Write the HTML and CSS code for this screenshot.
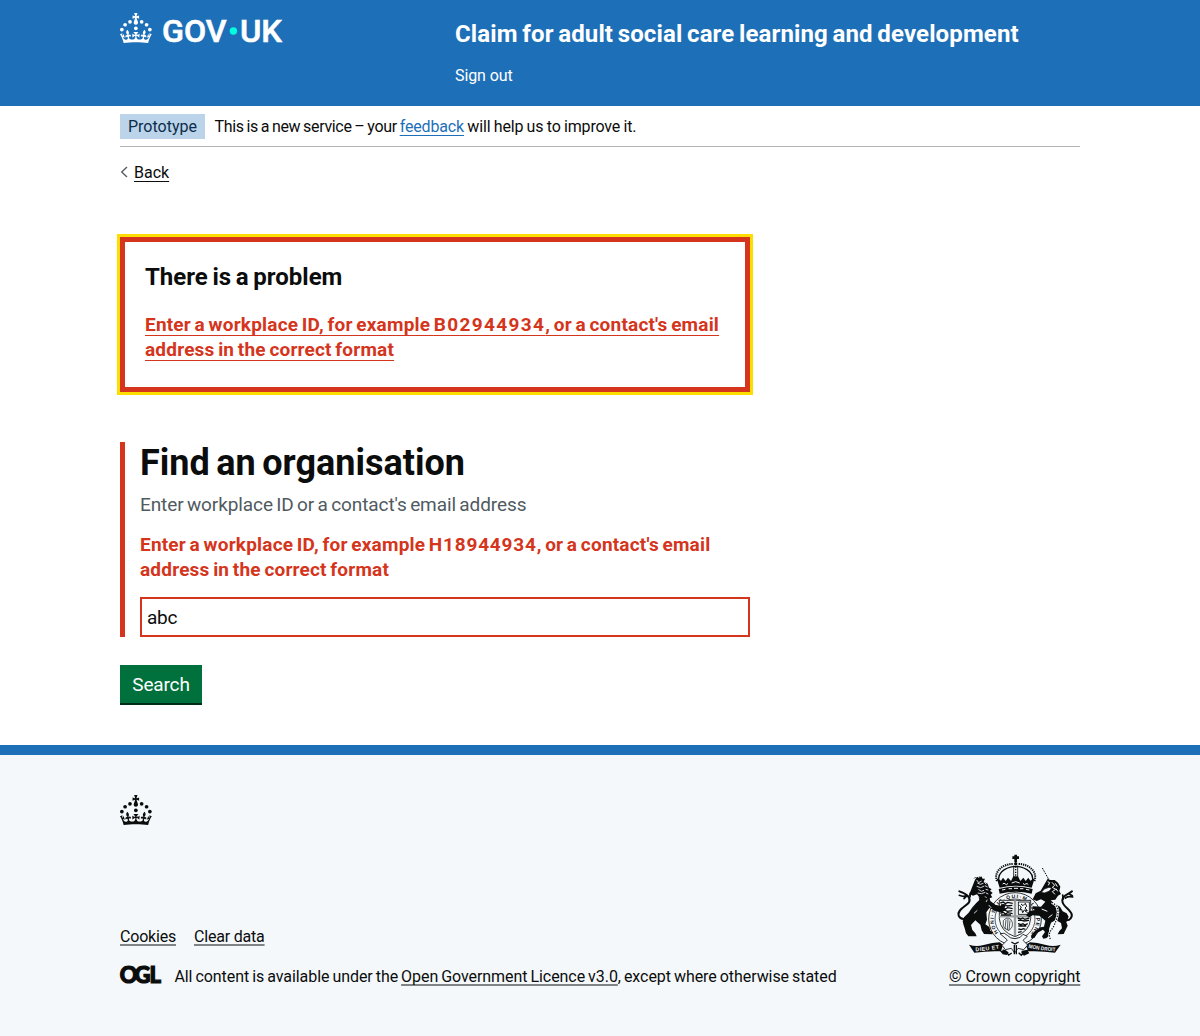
FILE: index.html
```html
<!DOCTYPE html>
<html lang="en">
<head>
<meta charset="utf-8">
<title>Find an organisation</title>
<link rel="stylesheet" href="styles.css">
</head>
<body>
<svg class="defs" width="0" height="0" aria-hidden="true">
  <symbol id="crown" viewBox="0 0 64 60">
    <circle cx="20" cy="17.6" r="3.7"/><circle cx="10.2" cy="23.5" r="3.7"/><circle cx="3.7" cy="33.2" r="3.7"/><circle cx="31.7" cy="30.6" r="3.7"/><circle cx="43.3" cy="17.6" r="3.7"/><circle cx="53.2" cy="23.5" r="3.7"/><circle cx="59.7" cy="33.2" r="3.7"/>
    <path d="M33.1,9.8c.2-.1.3-.3.5-.5l4.6,2.4v-6.8l-4.6,1.5c-.1-.2-.3-.3-.5-.5l1.9-5.9h-6.7l1.9,5.9c-.2.1-.3.3-.5.5l-4.6-1.5v6.8l4.6-2.4c.1.2.3.3.5.5l-2.6,8c-.9,2.8,1.2,5.7,4.1,5.7h0c3,0,5.1-2.9,4.1-5.7l-2.6-8ZM37,37.9s-3.4,3.8-4.1,6.1c2.2,0,4.2-.5,6.4-2.8l-.7,8.5c-2-2.8-4.4-4.1-5.7-3.8.1,3.1.5,6.7,5.8,7.2,3.7.3,6.7-1.5,7-3.8.4-2.6-2-4.3-3.7-1.6-1.4-4.5,2.4-6.1,4.9-3.2-1.9-4.5-1.8-7.7,2.4-10.9,3,4,2.6,7.3-1.2,11.1,2.4-1.3,6.2,0,4,4.6-1.2-2.8-3.7-2.2-4.2.2-.3,1.7.7,3.7,3,4.2,1.9.3,4.7-.9,7-5.9-1.3,0-2.4.7-3.9,1.7l2.4-8c.6,2.3,1.4,3.7,2.2,4.5.6-1.6.5-2.8,0-5.3l5,1.8c-2.6,3.6-5.2,8.7-7.3,17.5-7.4-1.1-15.7-1.7-24.5-1.7h0c-8.8,0-17.1.6-24.5,1.7-2.1-8.9-4.7-13.9-7.3-17.5l5-1.8c-.5,2.5-.6,3.7,0,5.3.8-.8,1.6-2.3,2.2-4.5l2.4,8c-1.5-1-2.6-1.7-3.9-1.7,2.3,5,5.2,6.2,7,5.9,2.3-.4,3.3-2.4,3-4.2-.5-2.4-3-3.1-4.2-.2-2.2-4.6,1.6-6,4-4.6-3.7-3.7-4.2-7.1-1.2-11.1,4.2,3.2,4.3,6.4,2.4,10.9,2.5-2.8,6.3-1.3,4.9,3.2-1.8-2.7-4.1-1-3.7,1.6.3,2.3,3.3,4.1,7,3.8,5.4-.5,5.7-4.2,5.8-7.2-1.3-.2-3.7,1-5.7,3.8l-.7-8.5c2.2,2.3,4.2,2.7,6.4,2.8-.7-2.3-4.1-6.1-4.1-6.1h10.6Z"/>
  </symbol>
</svg>

<header class="header">
  <div class="container header-row">
    <a class="logo" href="#" aria-label="GOV.UK">
      <svg width="170" height="44" viewBox="0 0 170 44" fill="#fff">
        <use href="#crown" width="32" height="30"/>
        <text class="logo-text" x="42.1" y="28.8" textLength="64.5" lengthAdjust="spacingAndGlyphs">GOV</text>
        <circle cx="113.4" cy="18" r="3.7" fill="#00ffe0"/>
        <text class="logo-text" x="120" y="28.8" textLength="42" lengthAdjust="spacingAndGlyphs">UK</text>
      </svg>
    </a>
    <div class="header-content">
      <a class="service-name" href="#">Claim for adult social care learning and development</a>
      <nav><a class="sign-out" href="#">Sign out</a></nav>
    </div>
  </div>
</header>

<div class="container">
  <div class="phase-banner">
    <strong class="tag">Prototype</strong>
    <span class="phase-text">This is a new service – your <a href="#">feedback</a><span class="phase-end"> will help us to improve it.</span></span>
  </div>
  <a class="back-link" href="#"><svg width="8" height="12" viewBox="0 0 8 12"><path d="M7 1 1.7 6 7 11" fill="none" stroke="#505a5f" stroke-width="1.3"/></svg><span>Back</span></a>

  <main class="main">
    <div class="error-summary">
      <h2>There is a problem</h2>
      <a href="#q">Enter a workplace ID, for example <span class="code-b">B02944934</span>, or a contact's email<br>address in the correct format</a>
    </div>
    <form>
      <div class="form-group">
        <h1>Find an organisation</h1>
        <div class="hint">Enter workplace ID or a contact's email address</div>
        <p class="error-message">Enter a workplace ID, for example <span class="code-h">H18944934</span>, or a contact's email<br>address in the correct format</p>
        <input id="q" type="text" value="abc">
      </div>
      <button class="button" type="button">Search</button>
    </form>
  </main>
</div>

<footer class="footer">
  <div class="container">
    <svg class="footer-crown" width="32" height="30" fill="#0b0c0c"><use href="#crown" width="32" height="30"/></svg>
    <div class="footer-row">
      <div class="footer-meta">
        <nav class="footer-links"><a href="#">Cookies</a><a href="#">Clear data</a></nav>
        <div class="licence">
          <svg class="ogl-logo" width="47" height="32" viewBox="-3 -7 47 32"><text class="ogl" x="-0.3 14.6 29.6" y="16.5">OGL</text></svg>
          <span class="licence-text">All content is available under the <a href="#">Open Government Licence v3.0</a>, except where otherwise stated</span>
        </div>
      </div>
      <div class="copyright">
        <svg class="crest" width="125" height="102" viewBox="39 27 375 306" fill="#0b0c0c" stroke="#0b0c0c" stroke-width="0">
          <!-- crown -->
          <path d="M223 29h8v5h6v8h-6v9h-8v-9h-6v-8h6z"/>
          <circle cx="227" cy="56" r="5"/>
          <g fill="none" stroke-width="4">
            <path d="M180 116C166 88 192 66 227 64C262 66 288 88 274 116"/>
            <path d="M171 108C160 82 186 56 220 57M283 108C294 82 268 56 234 57" stroke-width="6" stroke-dasharray="4 2.5"/>
            <path d="M221 62V98M233 62V98" stroke-width="2.5"/>
            <path d="M227 64V98" stroke-width="4" stroke-dasharray="4 4"/>
          </g>
          <path d="M170 100l13 7 6-9 8 10 7-10 9 10 7-14h14l7 14 9-10 7 10 8-10 6 9 13-7-9 28q-48-12-96 0z"/>
          <path d="M176 132q51-15 102 0l-3 14q-48-12-96 0z"/>
          <path d="M188 117q4-5 8 0t8-2M215 114q12-8 24 0M249 115q4 6 8 2t8 2M186 135l10-2M206 131h10M222 130h12M240 131h10M258 133l10 2" fill="none" stroke="#f4f8fb" stroke-width="3"/>
          <!-- garter and shield -->
          <circle cx="225" cy="222" r="79" fill="#f4f8fb" stroke-width="2.5"/>
          <circle cx="225" cy="222" r="60" fill="#f4f8fb" stroke-width="2"/>
          <path id="garter" d="M175 263A64 64 0 1 1 275 263" fill="none"/>
          <text class="garter-text"><textPath href="#garter" textLength="304">HONI·SOIT·QUI·MAL·Y·PENSE</textPath></text>
          <path d="M178 166h94v55q-3 39-47 54q-44-15-47-54z" fill="#f4f8fb" stroke-width="2.5"/>
          <path d="M225 166v108M178 214h94" stroke="#9a9d9f" stroke-width="7"/>
          <g fill="none" stroke-width="4">
            <path d="M181 174l9-3 6 5 7-4 15 3M183 180h13l6 3 15-2M181 190l9-3 6 5 7-4 15 3M183 196h13l6 3 15-2M181 205l9-3 6 5 7-4 15 3M183 210h30"/>
            <path d="M233 219l9 3 6-3 6 4 14-4M234 226h12l6 2 15-2M234 236l9 3 6-3 6 4 8-4M235 243h24M235 252l9 2 6-3 6 2M234 262l11-2"/>
            <rect x="235" y="171" width="33" height="37" stroke-width="2.5"/>
            <path d="M243 177l6 5 7-7 4 9-5 5 7 8-9-2-5 8-3-10-6 2 5-9-6-5M255 198l8 5" stroke-width="3"/>
            <path d="M190 245V227q9-12 21-5q9 8 5 24l-9 11q-15-7-17-12M198 224l-3 28M204 222l-2 33M210 226l-3 29" stroke-width="2"/>
          </g>
          <!-- lion -->
          <path d="M105 104l7-9 5 4 7-5 4 7 7 0-4 9 12 6 4 12 8 5-5 4 8 7-6 5 5 8-8 3 2 8 16 12 14 2 9-5 7 6-5 6 7 6-9 3-3 6-10-3-11-3-18-9-9 13 2 22-5 14 12 8 3 11 8 5-2 6-25-1-7-11-4-17-15-13-13 14 4 15 9 10 4 9-25 0-7-9-4-15-4-12-2-9 4-12 14-14 10-15 12-13 10-10-3-12-4-5-12 4-6-3-8 6-7z"/>
          <path d="M76 246L70 270M108 230L110 255" fill="none" stroke="#f4f8fb" stroke-width="0"/>
          <g fill="none" stroke-linecap="round">
            <path d="M97 209C82 223 63 228 56 212C50 193 79 184 87 172C94 159 81 146 58 139" stroke-width="6"/>
            <path d="M58 151q14 6 21 0M72 161l9-9M91 144l-1 12" stroke-width="5"/>
          </g>
          <path d="M110 105l6 8 9-5M112 114l9 4 9-3M110 124l12 4 11-5M115 133l9 6 8-3M113 144l11 2 12-4M133 112l6 6M135 122l8 4M137 133l8 2M138 144l7 3M112 153l6 5M135 154l5 5M146 180l8 9M112 196l-10 9M142 164l-4 7" fill="none" stroke="#f4f8fb" stroke-width="2.5"/>
          <path d="M102 101l5-5 6 8 9-7M118 94l1 8" fill="none" stroke-width="2"/>
          <!-- unicorn -->
          <path d="M307 69l19 34" fill="none" stroke-width="3" stroke-dasharray="5 3"/>
          <path d="M323 101l8 4 13 0 10 8 7 12-3 13 5 9-9 5-8 12-14 2 14 12 14 7 8 14 12 6 6 10-7 17 4 10-12 25-18 1 5-10 8-8-3-16-16-9-14 8-6 19 2 17-9 10-10 2-4-7 9-13-6-7-18 10-7 14-10 2-1-8 11-13 17-12 11-2 4-18-18-15-20-1-10 6-10-6 10-12 17-4-10-5 5-6 23 1 13-15-13-7-13 5-12-5 9-18 15-8z"/>
          <g fill="none" stroke-linecap="round">
            <path d="M367 222C391 234 402 212 390 199C382 188 366 181 367 166C368 148 384 150 396 139" stroke-width="6"/>
            <path d="M398 156q-13-3-22 3M368 150l2 12M388 147l9 5" stroke-width="5"/>
          </g>
          <path d="M313 132l14-5 8 3-8 9-14 5-9-2z" fill="#f4f8fb" stroke-width="2"/>
          <path d="M336 112l8 9-7 6 10 6-10 7 8 8M323 110l6 3-4 8M346 115l6 10M348 131l5 8M305 192l17 7M325 218l12-9" fill="none" stroke="#f4f8fb" stroke-width="3"/>
          <path d="M335 172q25 12 17 42t-20 43q-8 13 1 29" fill="none" stroke="#f4f8fb" stroke-width="7"/>
          <path d="M335 172q25 12 17 42t-20 43q-8 13 1 29" fill="none" stroke-width="3.5" stroke-dasharray="4 4"/>
          <!-- motto ribbon -->
          <path d="M87 299q22 8 44 1 28-7 48-8l10 7-6 20q-38-2-80 4z"/>
          <path d="M362 299q-22 8-44 1-28-7-48-8l-13 7 8 20q38-2 80 4z"/>
          <path d="M180 266q14-5 22 5t23 10q18-1 24-13l13 6-13 12 14 14-12 14-17-4-10 14-10-14-18 4-10-13 16-16z" fill="#f4f8fb" stroke-width="2.5"/>
          <path d="M188 315l9 3 9 12 9-6M264 315l-9 4-11 12-8-8M214 291l11 6 11-6M223 300v28M229 300v28" fill="none" stroke-width="4"/>
          <path d="M180 318l16-2 10 6-6 8-12-2zM245 317l17-2 6 10-16 7-8-8z"/>
          <path id="motto-left" d="M107 319q32-1 73-9" fill="none"/>
          <path id="motto-right" d="M265 308q40 10 83 11" fill="none"/>
          <text class="motto"><textPath href="#motto-left" textLength="71">DIEU ET</textPath></text>
          <text class="motto"><textPath href="#motto-right" textLength="82" lengthAdjust="spacingAndGlyphs">MON DROIT</textPath></text>
        </svg>
        <a href="#">© Crown copyright</a>
      </div>
    </div>
  </div>
</footer>
</body>
</html>
```
FILE: styles.css
```css
* { box-sizing: border-box; }
body {
  margin: 0;
  font: 16px/20px Roboto, "Noto Sans", sans-serif;
  color: #0b0c0c;
  background: #fff;
}
a { color: inherit; text-decoration-thickness: 1px; text-underline-offset: 3px; }
svg { display: block; flex: none; overflow: visible; }
.defs { position: absolute; }
.container { width: 960px; margin: 0 auto; }

.header { height: 106px; background: #1d70b8; color: #fff; }
.header-row { display: flex; }
.logo { width: 335px; padding-top: 13px; }
.logo-text { font: 500 31px Roboto, sans-serif; stroke: #fff; stroke-width: .6; }
.header-content { padding-top: 19px; }
.header a { text-decoration: none; }
.service-name { display: block; font-size: 24px; line-height: 30px; font-weight: 700; word-spacing: -1.5px; letter-spacing: .13px; }
.header nav { margin-top: 17px; letter-spacing: -.1px; }

.phase-banner {
  display: flex;
  align-items: center;
  gap: 9.5px;
  height: 41px;
  border-bottom: 1px solid #b1b4b6;
}
.tag { height: 25px; width: 85px; padding: 0 8px; line-height: 26px; font-weight: 400; background: #bbd4ea; color: #0c2d4a; white-space: nowrap; }
.phase-text { padding-top: 2px; white-space: nowrap; letter-spacing: -.34px; word-spacing: -.8px; }
.phase-text a { color: #1d70b8; letter-spacing: -.15px; }
.phase-end { letter-spacing: -.15px; word-spacing: -.5px; }
.back-link { display: inline-flex; align-items: center; gap: 6px; margin-top: 16px; height: 20px; text-decoration: none; }
.back-link svg { margin-top: -2px; }
.back-link span { text-decoration: underline; text-decoration-thickness: 1px; }

.main { width: 630px; padding-top: 54px; }
.error-summary {
  height: 155px;
  padding: 20px;
  border: 5px solid #d4351c;
  outline: 3px solid #fd0;
  color: #d4351c;
  font: 700 19px/25px Roboto, sans-serif;
  letter-spacing: .2px;
  word-spacing: -1.3px;
  white-space: nowrap;
}
.error-summary h2 { margin: 0 0 20px; font-size: 24px; line-height: 30px; color: #0b0c0c; letter-spacing: 0; }
.error-summary a { text-underline-offset: 4px; }
.code-b { letter-spacing: 1.35px; }
.code-h { letter-spacing: .8px; }
.form-group { margin-top: 50px; height: 195px; padding-left: 15px; border-left: 5px solid #d4351c; }
h1 { margin: 0; padding-top: 1px; font-size: 36px; line-height: 40px; word-spacing: -2.4px; }
.hint { margin-top: 9px; font-size: 19px; line-height: 25px; color: #505a5f; letter-spacing: -.1px; word-spacing: -1.2px; }
.error-message { margin: 15px 0; font: 700 19px/25px Roboto, sans-serif; color: #d4351c; letter-spacing: .2px; word-spacing: -1.3px; white-space: nowrap; }
.form-group input {
  display: block;
  width: 610px;
  height: 40px;
  padding: 5px;
  border: 2px solid #d4351c;
  border-radius: 0;
  font: 19px/25px Roboto, sans-serif;
  letter-spacing: -.3px;
  color: #0b0c0c;
}
.button {
  display: block;
  margin: 28px 0 0;
  width: 82px;
  height: 38px;
  padding: 1px 0 0;
  border: 0;
  background: #00703c;
  box-shadow: 0 2px 0 #002d18;
  color: #fff;
  font: 19px/37px Roboto, sans-serif;
  letter-spacing: -.15px;
}

.footer { margin-top: 42px; height: 291px; padding-top: 40px; border-top: 10px solid #1d70b8; background: #f4f8fb; }
.footer-row { display: flex; justify-content: space-between; align-items: flex-end; margin-top: 29px; }
.footer-links { display: flex; gap: 18px; margin-bottom: 20px; letter-spacing: -.2px; }
.licence { display: flex; gap: 10.4px; height: 20px; }
.ogl-logo { margin: -8px 0 0 -3px; }
.ogl { font: 900 22px Lato, sans-serif; stroke: #0b0c0c; stroke-width: 1.2; fill: #0b0c0c; }
.licence-text { letter-spacing: -.06px; word-spacing: -.9px; }
.footer a { text-decoration-thickness: 2px; text-decoration-color: #808386; text-underline-offset: 2px; text-decoration-skip-ink: none; }
.copyright { width: 131px; white-space: nowrap; letter-spacing: -.07px; }
.crest { margin: 0 0 11px 4px; }
.garter-text { font: 700 15px "Liberation Sans", sans-serif; }
.motto { font: 700 16px "Liberation Sans", sans-serif; fill: #f4f8fb; }
```
